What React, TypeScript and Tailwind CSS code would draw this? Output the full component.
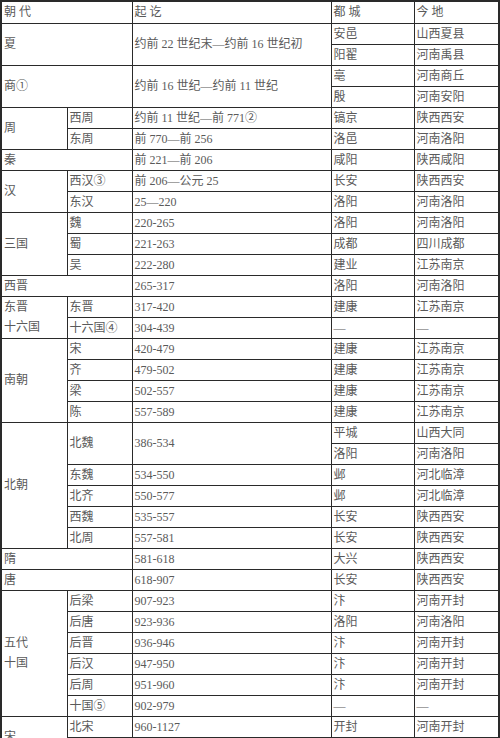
const td = "border border-[#2a2a2a] px-[2px] align-middle whitespace-nowrap";

const Cell = ({
  children,
  rowSpan,
  colSpan,
}: {
  children?: React.ReactNode;
  rowSpan?: number;
  colSpan?: number;
}) => (
  <td rowSpan={rowSpan} colSpan={colSpan} className={td}>
    {children}
  </td>
);

const Row = ({ children }: { children: React.ReactNode }) => <tr className="h-[21px]">{children}</tr>;

export default function App() {
  return (
    <div className="w-[500px] bg-white text-[#5a5a5a] text-[12px] leading-[20px] font-['Liberation_Serif','Noto_Sans_CJK_SC',serif]">
      <table className="w-[498px] table-fixed border-collapse border-2 border-[#2a2a2a]">
        <colgroup>
          <col className="w-[66px]" />
          <col className="w-[65px]" />
          <col className="w-[199px]" />
          <col className="w-[83px]" />
          <col className="w-[85px]" />
        </colgroup>
        <tbody>
          <tr className="h-[22px]">
            <Cell colSpan={2}>朝&nbsp;代</Cell>
            <Cell>起&nbsp;讫</Cell>
            <Cell>都&nbsp;城</Cell>
            <Cell>今&nbsp;地</Cell>
          </tr>

          <Row>
            <Cell rowSpan={2} colSpan={2}>夏</Cell>
            <Cell rowSpan={2}>约前 22 世纪末—约前 16 世纪初</Cell>
            <Cell>安邑</Cell>
            <Cell>山西夏县</Cell>
          </Row>
          <Row>
            <Cell>阳翟</Cell>
            <Cell>河南禹县</Cell>
          </Row>

          <Row>
            <Cell rowSpan={2} colSpan={2}>商①</Cell>
            <Cell rowSpan={2}>约前 16 世纪—约前 11 世纪</Cell>
            <Cell>亳</Cell>
            <Cell>河南商丘</Cell>
          </Row>
          <Row>
            <Cell>殷</Cell>
            <Cell>河南安阳</Cell>
          </Row>

          <Row>
            <Cell rowSpan={2}>周</Cell>
            <Cell>西周</Cell>
            <Cell>约前 11 世纪—前 771②</Cell>
            <Cell>镐京</Cell>
            <Cell>陕西西安</Cell>
          </Row>
          <Row>
            <Cell>东周</Cell>
            <Cell>前 770—前 256</Cell>
            <Cell>洛邑</Cell>
            <Cell>河南洛阳</Cell>
          </Row>

          <Row>
            <Cell colSpan={2}>秦</Cell>
            <Cell>前 221—前 206</Cell>
            <Cell>咸阳</Cell>
            <Cell>陕西咸阳</Cell>
          </Row>

          <Row>
            <Cell rowSpan={2}>汉</Cell>
            <Cell>西汉③</Cell>
            <Cell>前 206—公元 25</Cell>
            <Cell>长安</Cell>
            <Cell>陕西西安</Cell>
          </Row>
          <Row>
            <Cell>东汉</Cell>
            <Cell>25—220</Cell>
            <Cell>洛阳</Cell>
            <Cell>河南洛阳</Cell>
          </Row>

          <Row>
            <Cell rowSpan={3}>三国</Cell>
            <Cell>魏</Cell>
            <Cell>220-265</Cell>
            <Cell>洛阳</Cell>
            <Cell>河南洛阳</Cell>
          </Row>
          <Row>
            <Cell>蜀</Cell>
            <Cell>221-263</Cell>
            <Cell>成都</Cell>
            <Cell>四川成都</Cell>
          </Row>
          <Row>
            <Cell>吴</Cell>
            <Cell>222-280</Cell>
            <Cell>建业</Cell>
            <Cell>江苏南京</Cell>
          </Row>

          <Row>
            <Cell colSpan={2}>西晋</Cell>
            <Cell>265-317</Cell>
            <Cell>洛阳</Cell>
            <Cell>河南洛阳</Cell>
          </Row>

          <Row>
            <Cell rowSpan={2}>
              东晋
              <br />
              十六国
            </Cell>
            <Cell>东晋</Cell>
            <Cell>317-420</Cell>
            <Cell>建康</Cell>
            <Cell>江苏南京</Cell>
          </Row>
          <Row>
            <Cell>十六国④</Cell>
            <Cell>304-439</Cell>
            <Cell>—</Cell>
            <Cell>—</Cell>
          </Row>

          <Row>
            <Cell rowSpan={4}>南朝</Cell>
            <Cell>宋</Cell>
            <Cell>420-479</Cell>
            <Cell>建康</Cell>
            <Cell>江苏南京</Cell>
          </Row>
          <Row>
            <Cell>齐</Cell>
            <Cell>479-502</Cell>
            <Cell>建康</Cell>
            <Cell>江苏南京</Cell>
          </Row>
          <Row>
            <Cell>梁</Cell>
            <Cell>502-557</Cell>
            <Cell>建康</Cell>
            <Cell>江苏南京</Cell>
          </Row>
          <Row>
            <Cell>陈</Cell>
            <Cell>557-589</Cell>
            <Cell>建康</Cell>
            <Cell>江苏南京</Cell>
          </Row>

          <Row>
            <Cell rowSpan={6}>北朝</Cell>
            <Cell rowSpan={2}>北魏</Cell>
            <Cell rowSpan={2}>386-534</Cell>
            <Cell>平城</Cell>
            <Cell>山西大同</Cell>
          </Row>
          <Row>
            <Cell>洛阳</Cell>
            <Cell>河南洛阳</Cell>
          </Row>
          <Row>
            <Cell>东魏</Cell>
            <Cell>534-550</Cell>
            <Cell>邺</Cell>
            <Cell>河北临漳</Cell>
          </Row>
          <Row>
            <Cell>北齐</Cell>
            <Cell>550-577</Cell>
            <Cell>邺</Cell>
            <Cell>河北临漳</Cell>
          </Row>
          <Row>
            <Cell>西魏</Cell>
            <Cell>535-557</Cell>
            <Cell>长安</Cell>
            <Cell>陕西西安</Cell>
          </Row>
          <Row>
            <Cell>北周</Cell>
            <Cell>557-581</Cell>
            <Cell>长安</Cell>
            <Cell>陕西西安</Cell>
          </Row>

          <Row>
            <Cell colSpan={2}>隋</Cell>
            <Cell>581-618</Cell>
            <Cell>大兴</Cell>
            <Cell>陕西西安</Cell>
          </Row>
          <Row>
            <Cell colSpan={2}>唐</Cell>
            <Cell>618-907</Cell>
            <Cell>长安</Cell>
            <Cell>陕西西安</Cell>
          </Row>

          <Row>
            <Cell rowSpan={6}>
              五代
              <br />
              十国
            </Cell>
            <Cell>后梁</Cell>
            <Cell>907-923</Cell>
            <Cell>汴</Cell>
            <Cell>河南开封</Cell>
          </Row>
          <Row>
            <Cell>后唐</Cell>
            <Cell>923-936</Cell>
            <Cell>洛阳</Cell>
            <Cell>河南洛阳</Cell>
          </Row>
          <Row>
            <Cell>后晋</Cell>
            <Cell>936-946</Cell>
            <Cell>汴</Cell>
            <Cell>河南开封</Cell>
          </Row>
          <Row>
            <Cell>后汉</Cell>
            <Cell>947-950</Cell>
            <Cell>汴</Cell>
            <Cell>河南开封</Cell>
          </Row>
          <Row>
            <Cell>后周</Cell>
            <Cell>951-960</Cell>
            <Cell>汴</Cell>
            <Cell>河南开封</Cell>
          </Row>
          <Row>
            <Cell>十国⑤</Cell>
            <Cell>902-979</Cell>
            <Cell>—</Cell>
            <Cell>—</Cell>
          </Row>

          <Row>
            <Cell rowSpan={2}>宋</Cell>
            <Cell>北宋</Cell>
            <Cell>960-1127</Cell>
            <Cell>开封</Cell>
            <Cell>河南开封</Cell>
          </Row>
          <Row>
            <Cell>南宋</Cell>
            <Cell>1127-1279</Cell>
            <Cell>临安</Cell>
            <Cell>浙江杭州</Cell>
          </Row>
        </tbody>
      </table>
    </div>
  );
}
